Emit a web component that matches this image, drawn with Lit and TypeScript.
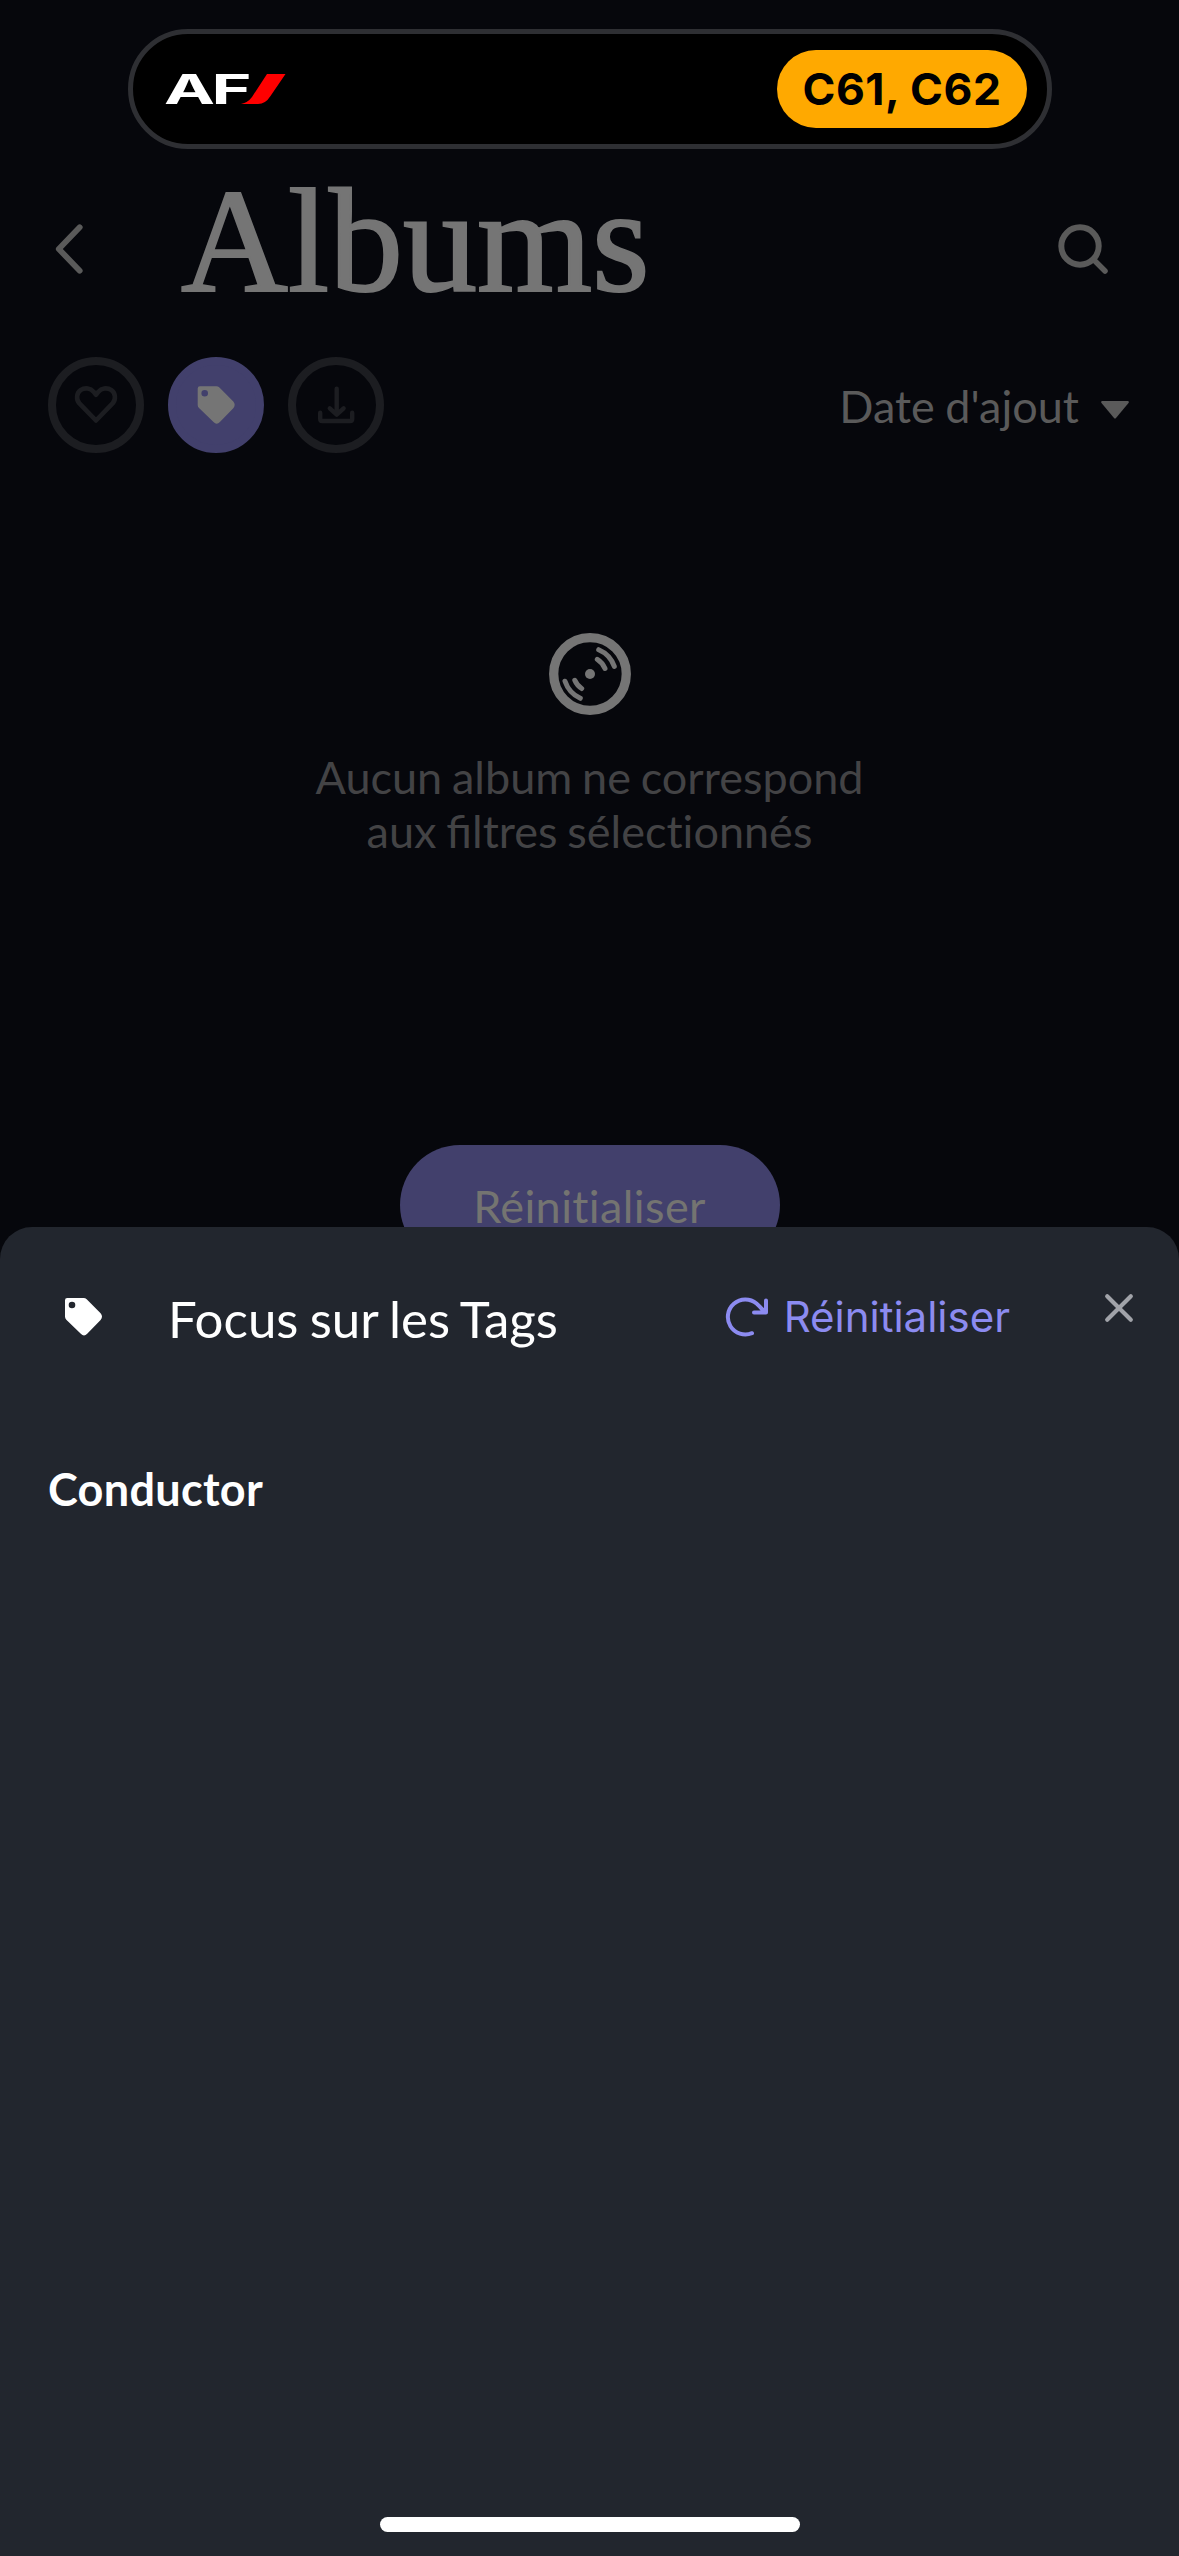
import { LitElement, html, css, svg } from "lit";
import { customElement } from "lit/decorators.js";

const tagShape = svg`<path fill="currentColor" fill-rule="evenodd" d="M2.200 0H18.600Q20.400 0 21.700 1.300L35.600 15.200Q38.400 18.600 35.600 21.900L22.200 35.800Q19 39 15.800 35.800L1.300 21.700Q0 20.400 0 18.600V2.200Q0 0 2.200 0ZM7 3.700A3.300 3.300 0 1 0 7 10.300A3.300 3.300 0 1 0 7 3.700Z"/>`;

@customElement("flight-island")
export class FlightIsland extends LitElement {
  static styles = css`
    :host { display: flex; align-items: center; justify-content: space-between; box-sizing: border-box;
      width: 924px; height: 120px; padding: 0 20px 0 32px; border: 5px solid #2e2f33; border-radius: 60px; background: #000; }
    .logo { display: block; width: 122px; height: 30px; overflow: visible; }
    .logo text { font: 700 41.300px Inter, "Liberation Sans", sans-serif; fill: #fff; }
    .gates { display: flex; align-items: center; justify-content: center; width: 250px; height: 78px; border-radius: 39px;
      background: #ffa900; color: #000; font: 700 44.500px Inter, "Liberation Sans", sans-serif; letter-spacing: .5px; white-space: pre; }
  `;
  render() {
    return html`
      <svg class="logo" viewBox="0 0 122 30">
        <text x="-1" y="30" textLength="51" lengthAdjust="spacingAndGlyphs">A</text>
        <text x="46.400" y="30" textLength="40" lengthAdjust="spacingAndGlyphs">F</text>
        <path fill="#ff0000" d="M102 0H120.500L105.500 22Q100.500 30 93 30H76Q83 28.500 87 23Z"/>
      </svg>
      <div class="gates">C61, C62</div>
    `;
  }
}

@customElement("album-filters")
export class AlbumFilters extends LitElement {
  static styles = css`
    :host { display: flex; align-items: center; justify-content: space-between; height: 96px; padding: 0 50px 0 48px; }
    .chips { display: flex; gap: 24px; }
    .chip { display: flex; box-sizing: border-box; width: 96px; height: 96px; border: 8px solid #1c1d21; border-radius: 50%; color: #1c1d21; }
    .chip.on { border-color: #42406c; background: #42406c; color: #757575; }
    .chip svg { width: 80px; height: 80px; }
    .sort { display: flex; align-items: center; gap: 22px; color: #5a5a5a; font: 400 45px/54px Lato, sans-serif; word-spacing: -1px; }
    .sort span { padding-top: 2px; }
    .caret { width: 28px; height: 18px; margin-top: 9px; }
  `;
  render() {
    return html`
      <div class="chips">
        <div class="chip"><svg viewBox="0 0 80 80" fill="none" stroke="currentColor" stroke-width="4.600" stroke-linejoin="round">
          <path d="M40 55.500L23.400 38.400C19.800 34.500 20.600 28 24.500 25.200C29.200 22 34.800 23.300 37.400 26.600L40 29.700L42.600 26.600C45.200 23.300 50.800 22 55.500 25.200C59.400 28 60.200 34.500 56.600 38.400Z"/></svg></div>
        <div class="chip on"><svg viewBox="0 0 80 80"><g transform="translate(21.700 21.300)">${tagShape}</g></svg></div>
        <div class="chip"><svg viewBox="0 0 80 80" fill="none" stroke="currentColor" stroke-width="4.400" stroke-linecap="round" stroke-linejoin="round">
          <path d="M40.700 23.700V48M33.800 43.300L40.700 49.700L47.600 43.300M24.200 47.800V54Q24.200 56 26.200 56H54.200Q56.200 56 56.200 54V47.800"/></svg></div>
      </div>
      <div class="sort"><span>Date d'ajout</span>
        <svg class="caret" viewBox="0 0 28 18"><path fill="currentColor" d="M1 0H27Q28.500 .5 27.500 2L15 17Q14 18 13 17L.5 2Q-.5 .5 1 0Z"/></svg></div>
    `;
  }
}

@customElement("tags-sheet")
export class TagsSheet extends LitElement {
  static styles = css`
    :host { display: flex; flex-direction: column; box-sizing: border-box; height: 1329px; padding: 60px 0 24px;
      border-radius: 32px 32px 0 0; background: #22262e; color: #fff; font-family: Lato, sans-serif; }
    .head { display: flex; align-items: center; height: 60px; padding: 0 45px 0 65px; }
    .tag { width: 38px; height: 38px; margin-right: 65px; }
    .title { flex: 1; font-size: 51px; line-height: 60px; padding-top: 3px; word-spacing: -1.800px; }
    .reset { display: flex; align-items: center; gap: 15px; color: #8c8bf0; font: 400 42px/60px Inter, "Liberation Sans", sans-serif; margin-right: 94px; }
    .reset svg { width: 44px; height: 44px; }
    .close { width: 30px; height: 30px; margin-top: -18px; }
    .group { margin: 115px 48px 0; font-size: 45px; line-height: 54px; font-weight: 700; letter-spacing: .3px; }
    .home { width: 420px; height: 15px; margin: auto auto 0; border-radius: 8px; background: #fff; }
  `;
  render() {
    return html`
      <div class="head">
        <svg class="tag" viewBox="0 0 38 38">${tagShape}</svg>
        <div class="title">Focus sur les Tags</div>
        <div class="reset">
          <svg viewBox="0 0 44 44" fill="none" stroke="currentColor" stroke-width="4" stroke-linecap="round" stroke-linejoin="round">
            <path d="M27 38.200A17.500 17.500 0 1 1 31.500 8.500Q35 11.500 39.500 17M41 5.500V17.500H29"/></svg>
          <span>Réinitialiser</span>
        </div>
        <svg class="close" viewBox="0 0 30 30" stroke="#a1a3a9" stroke-width="4.200" stroke-linecap="round"><path d="M3.200 3.200L26.800 26.800M26.800 3.200L3.200 26.800"/></svg>
      </div>
      <div class="group">Conductor</div>
      <div class="home"></div>
    `;
  }
}

@customElement("app-root")
export class AppRoot extends LitElement {
  static styles = css`
    :host { display: block; position: relative; width: 1179px; height: 2556px; overflow: hidden; background: #06070c; }
    .page { display: flex; flex-direction: column; height: 1227px; }
    flight-island { position: absolute; left: 128px; top: 29px; }
    tags-sheet { position: absolute; left: 0; right: 0; bottom: 0; }
    .bar { display: flex; align-items: center; height: 180px; margin-top: 159px; padding: 0 70px 0 54px; }
    .back { width: 30px; height: 52px; margin-right: 97px; }
    .title { flex: 1; margin: 0; padding-bottom: 15px; font: 400 148px/165px "Liberation Serif", serif; color: #757575; -webkit-text-stroke: 2.200px #757575; }
    .search { width: 52px; height: 52px; }
    album-filters { margin-top: 18px; }
    .empty { display: flex; flex-direction: column; align-items: center; margin-top: 180px; }
    .disc { width: 82px; height: 82px; }
    .note { margin: 35px 0 0; text-align: center; font: 400 45px/54px Lato, sans-serif; color: #434345; word-spacing: -1.700px;
      font-variant-ligatures: no-common-ligatures; }
    .joined { font-variant-ligatures: common-ligatures; }
    .again { display: flex; align-items: center; justify-content: center; box-sizing: border-box; width: 380px; height: 120px; padding-top: 2px;
      margin-top: 287px; flex: none; border-radius: 60px; background: #42406c; color: #747471; font: 400 45px/54px Lato, sans-serif;
      letter-spacing: .4px; font-variant-ligatures: no-common-ligatures; }
  `;
  render() {
    return html`
      <div class="page">
        <div class="bar">
          <svg class="back" viewBox="0 0 30 52" fill="none" stroke="#5a5a5a" stroke-width="5.800" stroke-linecap="round" stroke-linejoin="round"><path d="M25.700 4.300L4.800 26L25.700 47.700"/></svg>
          <h1 class="title">Albums</h1>
          <svg class="search" viewBox="0 0 52 52" fill="none" stroke="#5a5a5a" stroke-width="6"><circle cx="23" cy="23" r="18.700"/><path stroke-width="5.500" stroke-linecap="round" d="M37 37L48 48"/></svg>
        </div>
        <album-filters></album-filters>
        <div class="empty">
          <svg class="disc" viewBox="0 0 82 82" fill="none" stroke="#757575" stroke-width="5" stroke-linecap="round">
            <circle cx="41" cy="41" r="36.300" stroke-width="9.300"/><circle cx="41" cy="41" r="5" fill="#757575" stroke="none"/>
            <path d="M49.700 16.700Q61 21.500 65.300 33.300M48.300 26.300Q53.500 29.500 56 35.500M16 48.200Q20 60 31.300 65.300M25.800 47.300Q28 52.500 32.700 55.500"/>
          </svg>
          <p class="note">Aucun album ne correspond<br />aux <span class="joined">fi</span>ltres sélectionnés</p>
          <div class="again">Réinitialiser</div>
        </div>
      </div>
      <flight-island></flight-island>
      <tags-sheet></tags-sheet>
    `;
  }
}
